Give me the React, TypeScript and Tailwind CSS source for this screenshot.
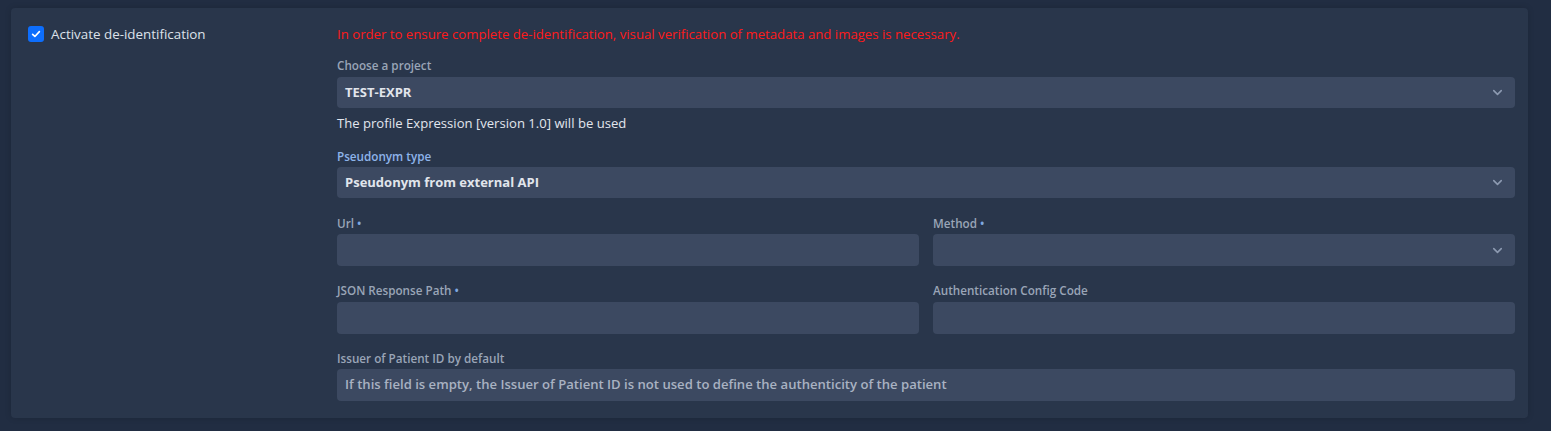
import { ChevronDown } from "lucide-react";

const FONT = "font-['Open_Sans','Noto_Sans',sans-serif]";

function FieldLabel({
  text,
  required = false,
  accent = false,
}: {
  text: string;
  required?: boolean;
  accent?: boolean;
}) {
  return (
    <div
      className={`text-[11.7px] leading-[14px] font-semibold ${
        accent ? "text-[#8eb4ea]" : "text-[#9aa5b7]"
      }`}
    >
      {text}
      {required ? <span className="ml-[3px] text-[#7fa8e0]">•</span> : null}
    </div>
  );
}

function Select({ value }: { value: string }) {
  return (
    <div className="flex h-[31px] items-center justify-between rounded-[4px] bg-[#3c4961] pl-[8px] pr-[10px]">
      <span className="text-[13px] font-bold text-[#e1e5ec]">{value}</span>
      <ChevronDown size={15} strokeWidth={2.5} className="text-[#8d9ab1]" />
    </div>
  );
}

function TextBox({ placeholder = "" }: { placeholder?: string }) {
  return (
    <div className="flex h-[32px] items-center rounded-[4px] bg-[#3c4961] px-[8px]">
      <span className="text-[13.1px] font-semibold text-[#a9b2c2]">
        {placeholder}
      </span>
    </div>
  );
}

export default function App() {
  return (
    <div className={`${FONT} min-h-[431px] w-full bg-[#212d42] pt-[8px] pl-[11px] pr-[23px] pb-[13px]`}>
      <div className="flex rounded-[4px] bg-[#29364b] pt-[17px] pb-[17px] pr-[13px] shadow-[0_0_6px_rgba(0,0,0,0.15)]">
        <div className="w-[326px] shrink-0 pl-[17px]">
          <label className="flex items-center gap-[7px] text-[13.4px] leading-[18px] text-[#dde2ea]">
            <span className="flex h-[16px] w-[16px] items-center justify-center rounded-[3px] bg-[#0d6efd]">
              <svg viewBox="0 0 16 16" className="h-[12px] w-[12px]">
                <path
                  d="M3.5 8.5 L6.5 11.3 L12.5 4.8"
                  fill="none"
                  stroke="white"
                  strokeWidth="2.2"
                  strokeLinecap="round"
                  strokeLinejoin="round"
                />
              </svg>
            </span>
            Activate de-identification
          </label>
        </div>

        <div className="flex min-w-0 flex-1 flex-col">
          <p className="text-[13.2px] leading-[18px] text-[#ff1a1a]">
            In order to ensure complete de-identification, visual verification of
            metadata and images is necessary.
          </p>

          <div className="mt-[15px]">
            <FieldLabel text="Choose a project" />
            <div className="mt-[5px]">
              <Select value="TEST-EXPR" />
            </div>
          </div>

          <p className="mt-[6px] text-[13.1px] leading-[18px] text-[#e2e6ee]">
            The profile Expression [version 1.0] will be used
          </p>

          <div className="mt-[17px]">
            <FieldLabel text="Pseudonym type" accent />
            <div className="mt-[4px]">
              <Select value="Pseudonym from external API" />
            </div>
          </div>

          <div className="mt-[18px] grid grid-cols-2 gap-x-[14px] gap-y-[17px]">
            <div>
              <FieldLabel text="Url" required />
              <div className="mt-[4px]">
                <TextBox />
              </div>
            </div>
            <div>
              <FieldLabel text="Method" required />
              <div className="mt-[4px]">
                <div className="flex h-[32px] items-center justify-end rounded-[4px] bg-[#3c4961] pr-[10px]">
                  <ChevronDown size={15} strokeWidth={2.5} className="text-[#8d9ab1]" />
                </div>
              </div>
            </div>
            <div>
              <FieldLabel text="JSON Response Path" required />
              <div className="mt-[5px]">
                <TextBox />
              </div>
            </div>
            <div>
              <FieldLabel text="Authentication Config Code" />
              <div className="mt-[5px]">
                <TextBox />
              </div>
            </div>
          </div>

          <div className="mt-[17px]">
            <FieldLabel text="Issuer of Patient ID by default" />
            <div className="mt-[4px]">
              <TextBox placeholder="If this field is empty, the Issuer of Patient ID is not used to define the authenticity of the patient" />
            </div>
          </div>
        </div>
      </div>
    </div>
  );
}
